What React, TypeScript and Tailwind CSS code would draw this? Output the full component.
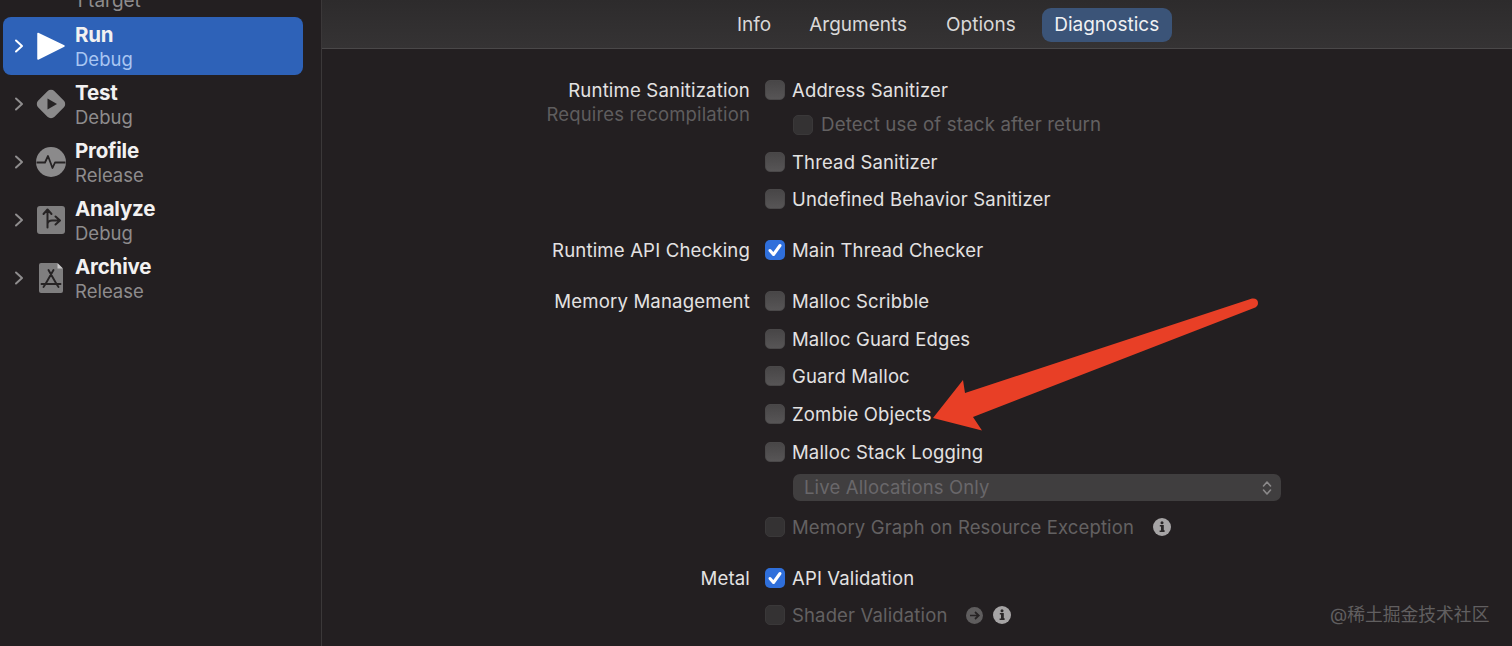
import React from "react";

const font = { fontFamily: "Inter, 'Noto Sans CJK SC', sans-serif" };

function Chevron({ color }: { color: string }) {
  return (
    <svg width="10" height="14" viewBox="0 0 10 14" className="shrink-0">
      <path d="M2 1.5 L8 7 L2 12.5" fill="none" stroke={color} strokeWidth="2" strokeLinecap="round" strokeLinejoin="round" />
    </svg>
  );
}

function RunIcon() {
  return (
    <svg width="30" height="30" viewBox="0 0 30 30">
      <path d="M2 2.5 L28 15 L2 28 Z" fill="#fff" stroke="#fff" strokeWidth="1.5" strokeLinejoin="round" />
    </svg>
  );
}
function TestIcon() {
  return (
    <svg width="30" height="30" viewBox="0 0 30 30">
      <rect x="3.5" y="3.5" width="23" height="23" rx="5" transform="rotate(45 15 15)" fill="#8b8a8b" />
      <path d="M11.5 9.5 L21 15 L11.5 20.5 Z" fill="#262324" />
    </svg>
  );
}
function ProfileIcon() {
  return (
    <svg width="30" height="30" viewBox="0 0 30 30">
      <circle cx="15" cy="15" r="15" fill="#8b8a8b" />
      <path d="M0.5 15.5 H9 L12 9 L16.5 21 L19 15.5 H29.5" fill="none" stroke="#262324" strokeWidth="1.8" strokeLinejoin="round" />
    </svg>
  );
}
function AnalyzeIcon() {
  return (
    <svg width="30" height="30" viewBox="0 0 30 30">
      <rect x="1" y="1" width="28" height="28" rx="3" fill="#7f7e7f" />
      <path d="M11.5 22.5 V5.5 M7.5 9 L11.5 4.5 L15.5 9 M11.5 18.5 C12 16.5 14 15.5 16 15.5 H23.5 M19.5 11.5 L24 15.5 L19.5 19.5" fill="none" stroke="#262324" strokeWidth="2" strokeLinecap="round" strokeLinejoin="round" />
    </svg>
  );
}
function ArchiveIcon() {
  return (
    <svg width="30" height="32" viewBox="0 0 30 32">
      <path d="M5 1 H21 L27 7 V29 A2 2 0 0 1 25 31 H5 A2 2 0 0 1 3 29 V3 A2 2 0 0 1 5 1 Z" fill="#7f7e7f" />
      <path d="M21.5 1 L27 6.5 H21.5 Z" fill="#c9c8c9" />
      <path d="M12.5 8 L20.5 22 M17.5 8 L9.5 22 M5.5 22 H24.5 M7.5 25 L9.5 22 M22.5 25 L20.5 22" fill="none" stroke="#262324" strokeWidth="1.9" strokeLinecap="round" />
    </svg>
  );
}

const schemes = [
  { name: "Run", sub: "Debug", icon: <RunIcon />, active: true },
  { name: "Test", sub: "Debug", icon: <TestIcon /> },
  { name: "Profile", sub: "Release", icon: <ProfileIcon /> },
  { name: "Analyze", sub: "Debug", icon: <AnalyzeIcon /> },
  { name: "Archive", sub: "Release", icon: <ArchiveIcon /> },
];

function Scheme({ name, sub, icon, active }: { name: string; sub: string; icon: React.ReactNode; active?: boolean }) {
  return (
    <div className={`flex h-[58px] w-[300px] items-center rounded-lg pl-[11px] ${active ? "bg-[#2e62b8]" : ""}`}>
      <Chevron color={active ? "#ffffff" : "#8f8d8e"} />
      <div className="ml-[12px] flex w-[30px] shrink-0 justify-center">{icon}</div>
      <div className="ml-[9px] flex flex-col pt-[2px]">
        <span className="text-[20.5px] leading-[24px] font-bold text-[#f2f1f1] tracking-[-0.2px]">{name}</span>
        <span className={`text-[18.5px] leading-[24px] ${active ? "text-[#a9c6f2]" : "text-[#8e8c8d]"}`}>{sub}</span>
      </div>
    </div>
  );
}

function Check({ state = "off" }: { state?: "off" | "on" | "dim" }) {
  if (state === "on") {
    return (
      <span className="flex h-[20px] w-[20px] shrink-0 items-center justify-center rounded-[5px] bg-[#2f6fdb]">
        <svg width="16" height="16" viewBox="0 0 16 16">
          <path d="M3 8.5 L6.5 12.5 L13 3.5" fill="none" stroke="#fff" strokeWidth="3" strokeLinecap="round" strokeLinejoin="round" />
        </svg>
      </span>
    );
  }
  return (
    <span
      className={`h-[20px] w-[20px] shrink-0 rounded-[5px] border ${
        state === "dim" ? "border-[#3a3839] bg-[#343233]" : "border-[#4a4849] bg-gradient-to-b from-[#484647] to-[#575556]"
      }`}
    />
  );
}

function InfoIcon() {
  return (
    <svg width="18" height="18" viewBox="0 0 18 18" className="shrink-0">
      <circle cx="9" cy="9" r="9" fill="#a6a4a5" />
      <circle cx="9" cy="4.8" r="1.5" fill="#2a2728" />
      <path d="M6.8 7.8 H10 V12.8 H11.4 M6.6 13.2 H11.6 M8.8 8 V13" fill="none" stroke="#2a2728" strokeWidth="1.6" />
    </svg>
  );
}

function Row({ mt, indent, dim, state, text, children }: { mt: string; indent?: boolean; dim?: boolean; state?: "off" | "on" | "dim"; text: string; children?: React.ReactNode }) {
  return (
    <div className={`flex h-[30px] items-center ${mt} ${indent ? "pl-[28px]" : ""}`}>
      <Check state={state} />
      <span className={`leading-[30px] tracking-[0.15px] ${indent ? "ml-[8px] text-[18.7px]" : "ml-[7px] text-[18.5px]"} ${dim ? "text-[#636162]" : "text-[#e3e2e2]"}`}>{text}</span>
      {children}
    </div>
  );
}

function Label({ children }: { children: React.ReactNode }) {
  return <div className="h-[30px] text-right text-[18.6px] leading-[30px] tracking-[0.15px] text-[#e3e2e2]">{children}</div>;
}

export default function App() {
  return (
    <div className="relative flex h-screen w-full overflow-hidden bg-[#231f21]" style={font}>
      <aside className="w-[322px] shrink-0 overflow-hidden border-r border-r-[#3b3839] pl-[3px]">
        <div className="mt-[-41px]">
          <div className="flex h-[58px] items-center pl-[11px]">
            <Chevron color="#8f8d8e" />
            <div className="ml-[51px] flex flex-col pt-[2px]">
              <span className="h-[24px]" />
              <span className="text-[19px] leading-[24px] text-[#8e8c8d]">1 target</span>
            </div>
          </div>
          {schemes.map((s) => (
            <Scheme key={s.name} {...s} />
          ))}
        </div>
      </aside>

      <main className="min-w-0 flex-1">
        <header className="flex h-[49px] items-center border-b border-b-[#4a4849] bg-gradient-to-b from-[#2d2b2c] to-[#353334] pl-[415px] pt-[2px] text-[19px] text-[#d9d8d8]">
          <span>Info</span>
          <span className="ml-[38px]">Arguments</span>
          <span className="ml-[39px]">Options</span>
          <span className="ml-[26px] flex h-[34px] w-[130px] items-center justify-center rounded-[9px] bg-[#3b5478] text-[#f0f1f3]">Diagnostics</span>
        </header>

        <div className="grid grid-cols-[428px_1fr] gap-x-[15px] pt-[26px]">
          <div>
            <Label>Runtime Sanitization</Label>
            <div className="-mt-[6px] h-[30px] text-right text-[18.5px] leading-[30px] tracking-[0.15px] text-[#5f5d5e]">Requires recompilation</div>
          </div>
          <div>
            <Row text="Address Sanitizer" mt="mt-0" />
            <Row text="Detect use of stack after return" mt="mt-[5px]" indent dim state="dim" />
            <Row text="Thread Sanitizer" mt="mt-[7px]" />
            <Row text="Undefined Behavior Sanitizer" mt="mt-[7px]" />
          </div>

          <div className="mt-[21px]"><Label>Runtime API Checking</Label></div>
          <div>
            <Row text="Main Thread Checker" mt="mt-[21px]" state="on" />
          </div>

          <div className="mt-[21px]"><Label>Memory Management</Label></div>
          <div>
            <Row text="Malloc Scribble" mt="mt-[21px]" />
            <Row text="Malloc Guard Edges" mt="mt-[8px]" />
            <Row text="Guard Malloc" mt="mt-[7px]" />
            <Row text="Zombie Objects" mt="mt-[8px]" />
            <Row text="Malloc Stack Logging" mt="mt-[8px]" />
            <div className="ml-[28px] mt-[7px] flex h-[27px] w-[488px] items-center justify-between rounded-[7px] bg-[#403e3f] pl-[11px] pr-[8px] text-[18.5px] tracking-[0.15px] text-[#69676a]">
              <span>Live Allocations Only</span>
              <svg width="12" height="18" viewBox="0 0 12 18">
                <path d="M2.5 7 L6 3 L9.5 7 M2.5 11 L6 15 L9.5 11" fill="none" stroke="#8b898a" strokeWidth="1.6" strokeLinecap="round" strokeLinejoin="round" />
              </svg>
            </div>
            <Row text="Memory Graph on Resource Exception" mt="mt-[11px]" dim state="dim">
              <span className="ml-[19px] flex"><InfoIcon /></span>
            </Row>
          </div>

          <div className="mt-[21px]"><Label>Metal</Label></div>
          <div>
            <Row text="API Validation" mt="mt-[21px]" state="on" />
            <Row text="Shader Validation" mt="mt-[7px]" dim state="dim">
              <svg width="17" height="17" viewBox="0 0 17 17" className="ml-[19px] shrink-0">
                <circle cx="8.5" cy="8.5" r="8.5" fill="#5f5d5e" />
                <path d="M4 8.5 H12.5 M9 5 L12.8 8.5 L9 12" fill="none" stroke="#262324" strokeWidth="1.7" />
              </svg>
              <span className="ml-[10px] flex"><InfoIcon /></span>
            </Row>
          </div>
        </div>
      </main>

      <svg className="pointer-events-none absolute left-[925px] top-[292px]" width="340" height="145" viewBox="925 292 340 145">
        <path
          d="M1252 298.5 Q1258 298 1258 303 Q1258 306.5 1254 308 L973 417 L982 430.5 L933 418 L963 380 L965 393 Z"
          fill="#e83f26"
        />
      </svg>

      <span className="absolute left-[1330px] top-[603px] text-[17.8px] leading-[24px] text-[#615f60]" style={font}>
        @稀土掘金技术社区
      </span>
    </div>
  );
}
